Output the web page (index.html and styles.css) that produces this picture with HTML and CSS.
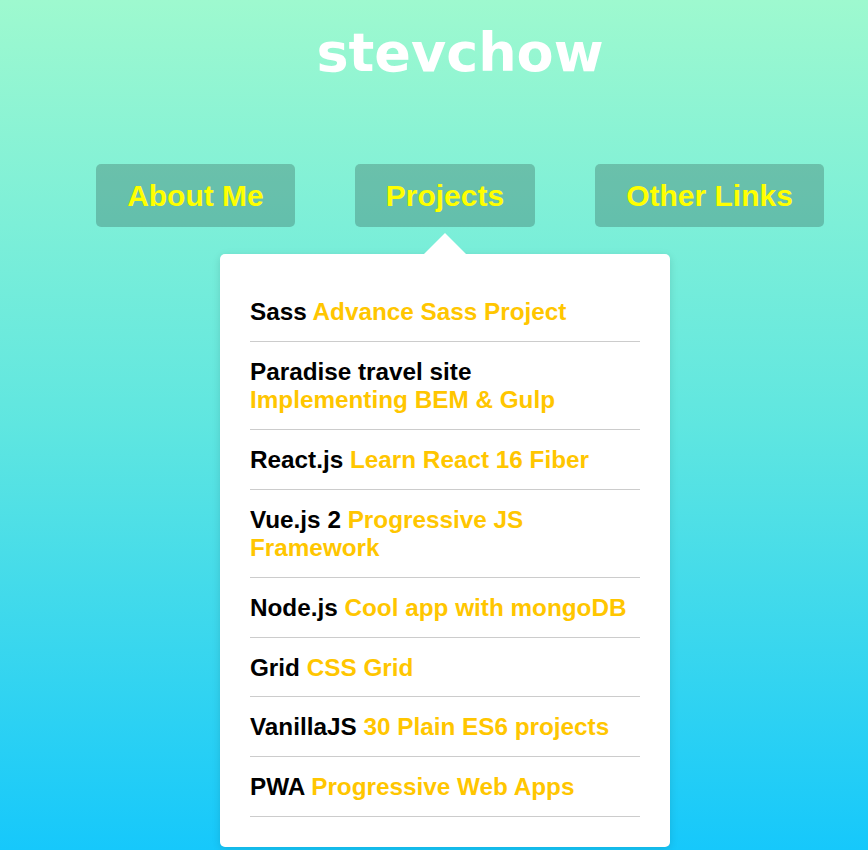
FILE: index.html
```html
<!DOCTYPE html>
<html lang="en">
<head>
<meta charset="utf-8">
<title>stevchow</title>
<link rel="stylesheet" href="styles.css">
</head>
<body>
<div class="page">
  <h1 class="logo">stevchow</h1>
  <nav class="nav">
    <ul class="nav-list">
      <li class="nav-item"><a class="nav-btn" href="#">About Me</a></li>
      <li class="nav-item has-menu">
        <a class="nav-btn" href="#">Projects</a>
        <div class="dropdown">
          <ul class="menu">
            <li class="menu-item"><span class="tech">Sass</span> <a class="proj" href="#">Advance Sass Project</a></li>
            <li class="menu-item"><span class="tech">Paradise travel site</span><br><a class="proj" href="#">Implementing BEM &amp; Gulp</a></li>
            <li class="menu-item"><span class="tech">React.js</span> <a class="proj" href="#">Learn React 16 Fiber</a></li>
            <li class="menu-item"><span class="tech">Vue.js 2</span> <a class="proj" href="#">Progressive JS Framework</a></li>
            <li class="menu-item"><span class="tech">Node.js</span> <a class="proj" href="#">Cool app with mongoDB</a></li>
            <li class="menu-item"><span class="tech">Grid</span> <a class="proj" href="#">CSS Grid</a></li>
            <li class="menu-item"><span class="tech">VanillaJS</span> <a class="proj" href="#">30 Plain ES6 projects</a></li>
            <li class="menu-item"><span class="tech">PWA</span> <a class="proj" href="#">Progressive Web Apps</a></li>
          </ul>
        </div>
      </li>
      <li class="nav-item"><a class="nav-btn" href="#">Other Links</a></li>
    </ul>
  </nav>
</div>
</body>
</html>
```
FILE: styles.css
```css
html, body {
  margin: 0;
  padding: 0;
}
body {
  min-height: 850px;
  background: linear-gradient(to bottom, #9ef9cf 0%, #5fe6e0 50%, #16c8fb 100%);
  font-family: "Liberation Sans", Arial, sans-serif;
  overflow: hidden;
}
.page {
  padding: 21px 0 0 52px;
  display: flex;
  flex-direction: column;
  align-items: center;
}
.logo {
  margin: 0;
  font-family: "DejaVu Sans", Verdana, sans-serif;
  font-weight: bold;
  font-size: 54px;
  line-height: 64px;
  color: #fff;
}
.nav {
  margin-top: 79px;
}
.nav-list {
  list-style: none;
  margin: 0;
  padding: 0;
  display: flex;
  gap: 60px;
}
.nav-item {
  position: relative;
}
.nav-btn {
  display: block;
  height: 63px;
  line-height: 63px;
  padding: 0 31px;
  border-radius: 5px;
  background: rgba(0, 0, 0, 0.2);
  color: #ffff00;
  font-weight: bold;
  font-size: 30px;
  text-decoration: none;
}
.dropdown {
  position: absolute;
  top: 90px;
  left: 50%;
  margin-left: -225px;
  width: 450px;
  box-sizing: border-box;
  padding: 28px 30px 30px;
  background: #fff;
  border-radius: 5px;
  box-shadow: 0 2px 8px rgba(0, 0, 0, 0.12);
}
.dropdown::before {
  content: "";
  position: absolute;
  top: -21px;
  left: 50%;
  margin-left: -21px;
  border-left: 21px solid transparent;
  border-right: 21px solid transparent;
  border-bottom: 21px solid #fff;
}
.menu {
  list-style: none;
  margin: 0;
  padding: 0;
}
.menu-item {
  padding: 16px 0 15px;
  border-bottom: 1px solid #cccccc;
  font-size: 24.3px;
  line-height: 28px;
  font-weight: bold;
}
.menu-item:nth-child(6) {
  padding-bottom: 14px;
}
.tech {
  color: #000;
}
.proj {
  color: #ffc600;
  text-decoration: none;
}
```
